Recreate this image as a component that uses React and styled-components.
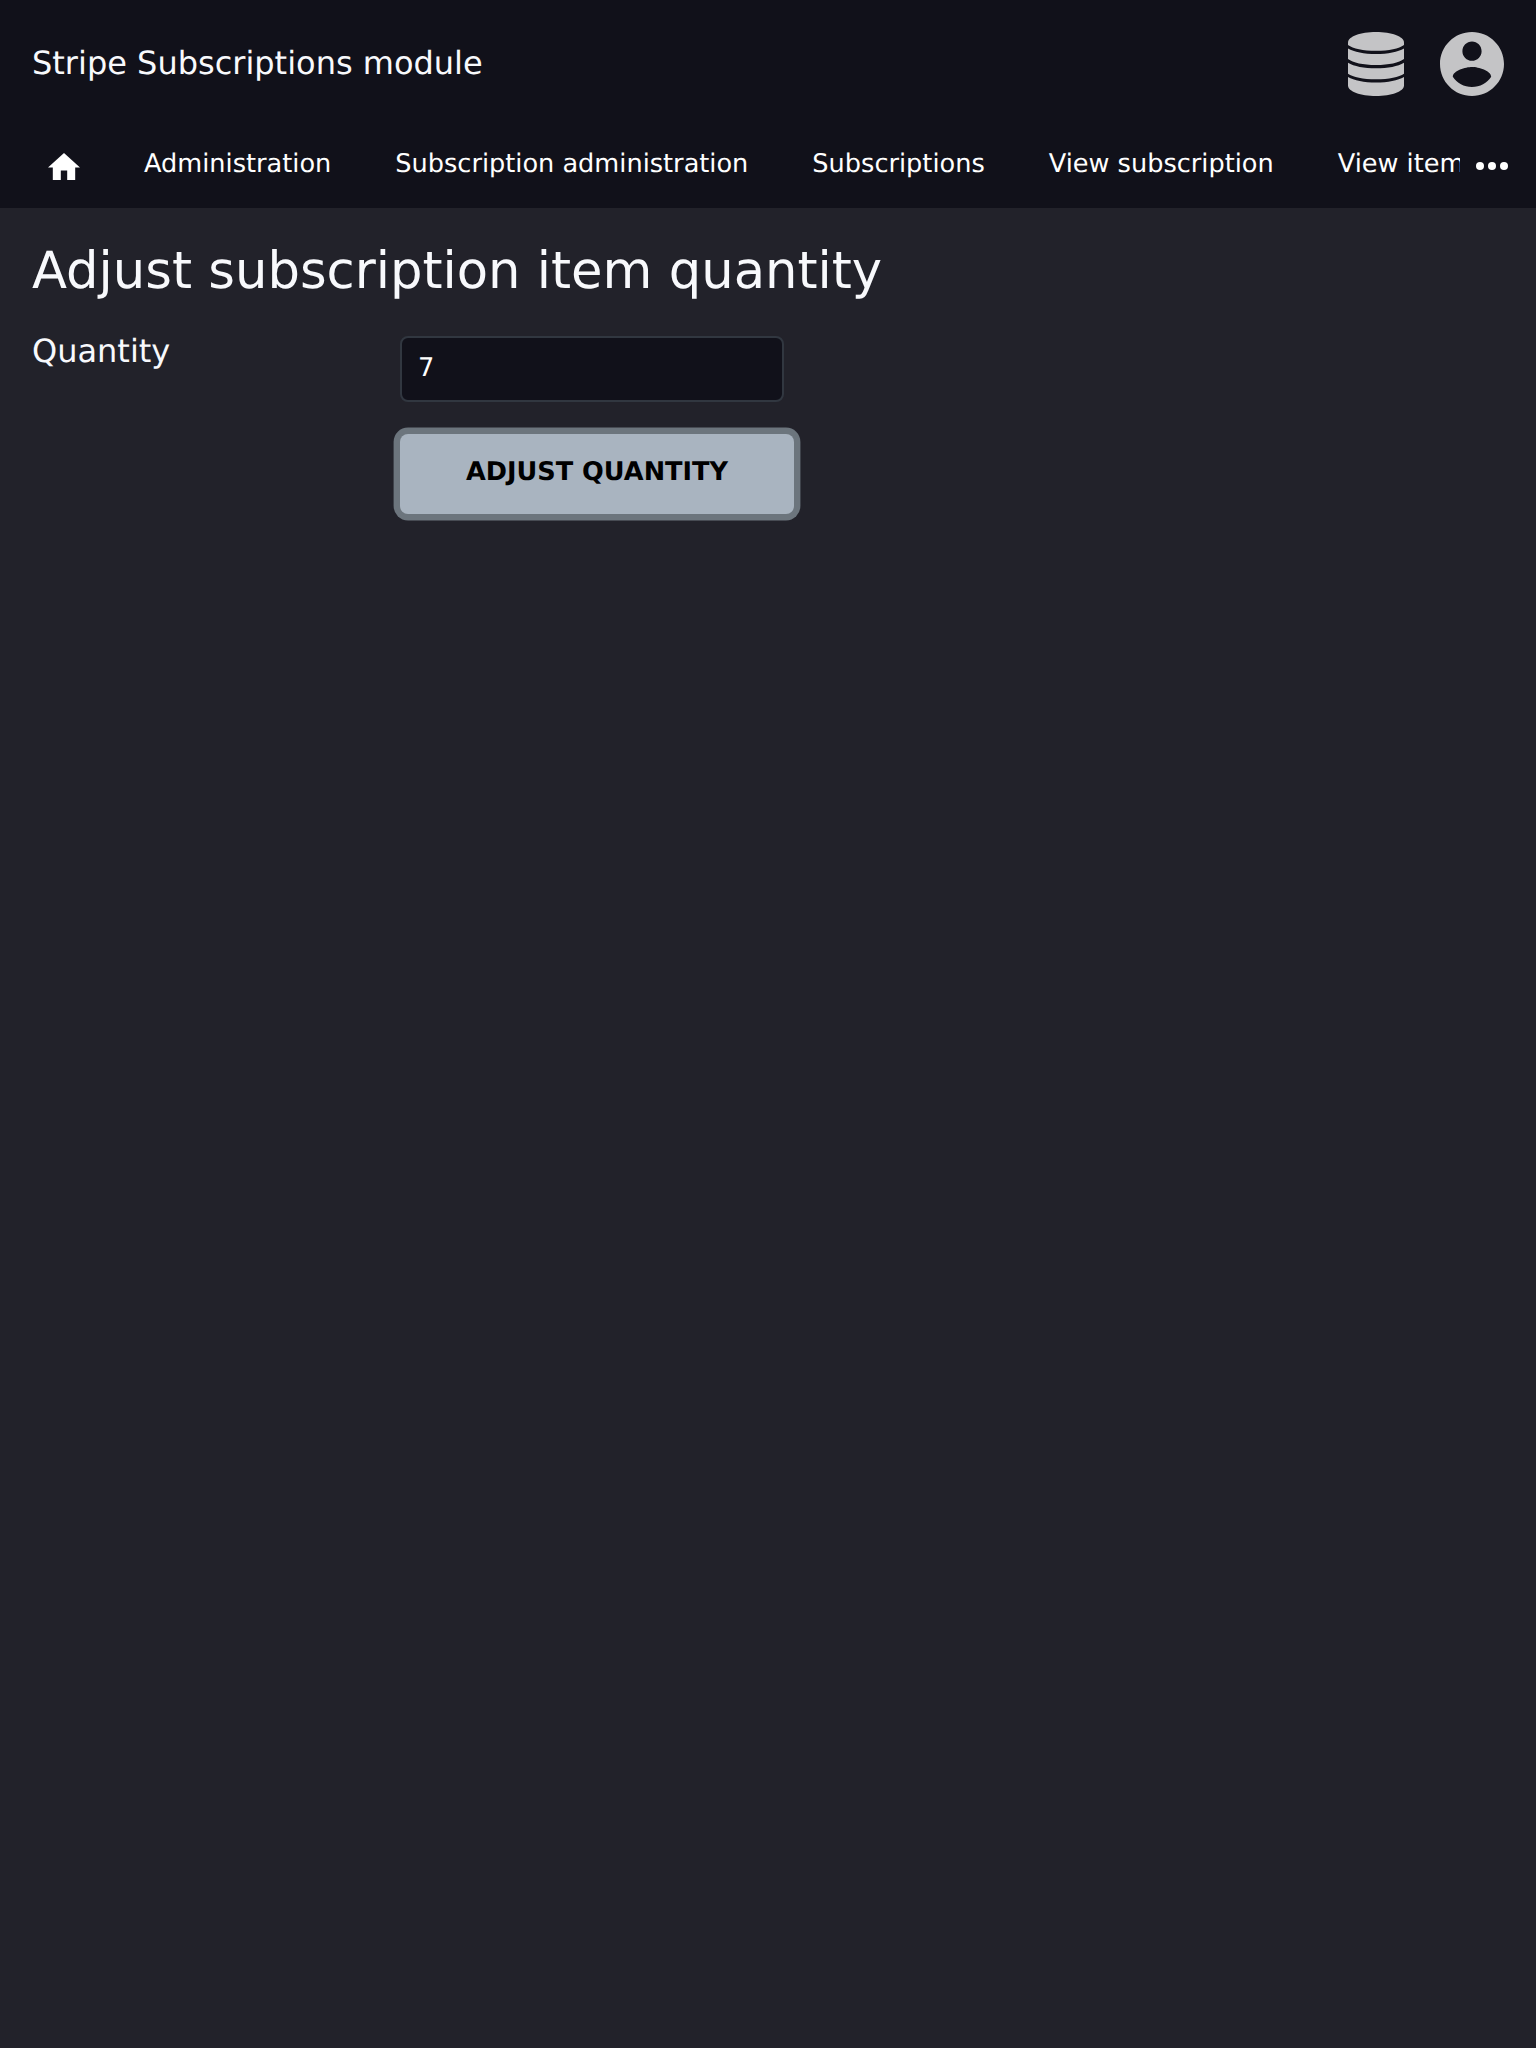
import React from "react";
import styled, { createGlobalStyle } from "styled-components";

const Global = createGlobalStyle`
  html, body { margin: 0; background: #22222a; }
  body { font-family: "DejaVu Sans", sans-serif; font-size: 32px; color: #f8f9fc; text-rendering: geometricPrecision; }
  input, button { text-rendering: inherit; }
  #root { min-height: 100vh; }
  * { box-sizing: border-box; }
`;

const Header = styled.header`
  background: #11111a;
  height: 208px;
`;

const TopBar = styled.div`
  height: 128px;
  padding: 0 32px;
  display: flex;
  align-items: center;
  justify-content: space-between;
`;

const SiteTitle = styled.div`
  line-height: 48px;
  padding-bottom: 2px;
`;

const Actions = styled.div`
  display: flex;
  gap: 36px;
  color: #c4c4c6;
`;

const Icon = styled.svg`
  display: block;
  flex: none;
  fill: currentColor;
`;

const Nav = styled.nav`
  height: 80px;
  display: flex;
  align-items: flex-start;
  color: #fff;
`;

const HomeLink = styled.div`
  width: 112px;
  padding: 25px 0 0 48px;
  flex: none;
`;

const Crumbs = styled.div`
  flex: 1;
  min-width: 0;
  display: flex;
  overflow: hidden;
`;

const Crumb = styled.a`
  flex: none;
  padding: 16px 32px;
  font-size: 25.6px;
  line-height: 40px;
  white-space: nowrap;
`;

const More = styled.div`
  flex: none;
  width: 76px;
  padding: 34px 0 0 16px;
`;

const Main = styled.main`
  padding: 33px 32px 32px;
`;

const Title = styled.h1`
  margin: 0 0 21px;
  font-size: 51.2px;
  font-weight: 400;
  line-height: 60px;
`;

const Form = styled.form`
  display: grid;
  grid-template-columns: 336px 384px;
  column-gap: 32px;
`;

const Label = styled.label`
  padding-top: 11px;
  line-height: 37px;
`;

const Controls = styled.div`
  display: flex;
  flex-direction: column;
  align-items: flex-start;
  gap: 32px;
  padding-top: 14px;
`;

const Input = styled.input`
  width: 384px;
  height: 66px;
  padding: 0 16px 3px;
  border: 2px solid #313740;
  border-radius: 8px;
  background: #11111a;
  color: #fff;
  font: 25.6px/40px "DejaVu Sans", sans-serif;
  outline: none;
`;

const Submit = styled.button`
  width: 394px;
  height: 80px;
  padding: 0 0 4px;
  border: 0;
  border-radius: 8px;
  background: #a9b4c0;
  color: #000;
  font: bold 25.6px "DejaVu Sans", sans-serif;
  text-transform: uppercase;
  white-space: nowrap;
  box-shadow: 0 0 0 6.4px #6c757d;
`;

const crumbs = ["Administration", "Subscription administration", "Subscriptions", "View subscription", "View item"];

export default function App() {
  return (
    <>
      <Global />
      <Header>
        <TopBar>
          <SiteTitle>Stripe Subscriptions module</SiteTitle>
          <Actions>
            <Icon width="56" height="64" viewBox="0 0 56 64">
              <path d="M0 10.5C0 4.5 12.5 0 28 0s28 4.5 28 10.5v2.500C51 16.700 41 18.800 28 18.800S5 16.700 0 13z" />
              <path d="M0 16.5C6 20 16 22 28 22s22-2 28-5.500v10.500C51 30.700 41 33 28 33S5 30.700 0 27z" />
              <path d="M0 30.700C6 34.300 16 36.300 28 36.300s22-2 28-5.600v11C51 45.200 41 47.300 28 47.300S5 45.200 0 41.700z" />
              <path d="M0 45C6 48.500 16 50.600 28 50.600s22-2.100 28-5.600v8.500C56 59.500 43.500 64 28 64S0 59.500 0 53.500z" />
            </Icon>
            <Icon width="64" height="64" viewBox="2 2 20 20">
              <path d="M12 2C6.480 2 2 6.480 2 12s4.480 10 10 10 10-4.480 10-10S17.520 2 12 2zm0 3c1.660 0 3 1.340 3 3s-1.340 3-3 3-3-1.340-3-3 1.340-3 3-3zm0 14.200c-2.500 0-4.710-1.280-6-3.220C6.030 13.990 10 12.900 12 12.900s5.970 1.090 6 3.080c-1.290 1.940-3.500 3.220-6 3.220z" />
            </Icon>
          </Actions>
        </TopBar>
        <Nav>
          <HomeLink>
            <Icon width="32" height="27.2" viewBox="2 3 20 17">
              <path d="M10 20v-6h4v6h5v-8h3L12 3 2 12h3v8z" />
            </Icon>
          </HomeLink>
          <Crumbs>
            {crumbs.map((c) => (
              <Crumb key={c}>{c}</Crumb>
            ))}
          </Crumbs>
          <More>
            <Icon width="32" height="8" viewBox="0 0 32 8">
              <circle cx="4" cy="4" r="4" />
              <circle cx="16" cy="4" r="4" />
              <circle cx="28" cy="4" r="4" />
            </Icon>
          </More>
        </Nav>
      </Header>
      <Main>
        <Title>Adjust subscription item quantity</Title>
        <Form>
          <Label htmlFor="quantity">Quantity</Label>
          <Controls>
            <Input id="quantity" defaultValue="7" />
            <Submit type="button">Adjust quantity</Submit>
          </Controls>
        </Form>
      </Main>
    </>
  );
}
